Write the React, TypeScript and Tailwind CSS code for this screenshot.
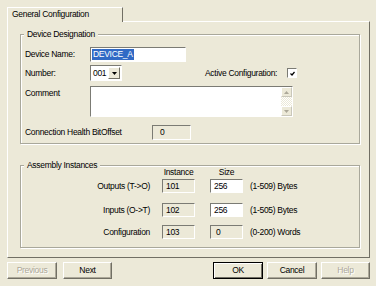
import React from 'react'

// XP classic-ish 3D edges
const sunkenWhite = 'border border-t-[#7b7b74] border-l-[#7b7b74] border-b-white border-r-white bg-white'
const sunkenGray = 'border border-t-[#7b7b74] border-l-[#7b7b74] border-b-white border-r-white bg-[#ECE9D8]'
const etched = 'border border-[#a9a89b] shadow-[inset_1px_1px_0_#fff,1px_1px_0_#fff]'

function Group({ title, className, children }: { title: string; className: string; children: React.ReactNode }) {
  return (
    <div className={`relative ml-[12px] w-[340px] ${etched} ${className}`}>
      <span className="absolute -top-[6px] left-[3px] bg-[#ECE9D8] px-[3px] leading-[11px]">{title}</span>
      {children}
    </div>
  )
}

function Button({ label, w, ml, disabled, isDefault }: { label: string; w: string; ml: string; disabled?: boolean; isDefault?: boolean }) {
  const edge = isDefault
    ? 'border border-black shadow-[inset_1px_1px_0_#fff,inset_-1px_-1px_0_#716f64]'
    : 'border border-t-white border-l-white border-b-[#716f64] border-r-[#716f64] shadow-[inset_-1px_-1px_0_#aca899]'
  return (
    <div className={`${w} ${ml} h-[17px] flex items-center justify-center ${edge} ${disabled ? 'text-[#aca899] [text-shadow:1px_1px_0_#fff]' : ''}`}>
      {label}
    </div>
  )
}

function Arrow({ up, color }: { up?: boolean; color: string }) {
  return (
    <svg width="5" height="3" viewBox="0 0 5 3">
      <path d={up ? 'M0 3 L2.5 0 L5 3 Z' : 'M0 0 L5 0 L2.5 3 Z'} fill={color} />
    </svg>
  )
}

export default function App() {
  const rows = [
    { label: 'Outputs (T->O)', inst: '101', size: '256', range: '(1-509) Bytes', editable: true, mt: 'mt-[1px]' },
    { label: 'Inputs (O->T)', inst: '102', size: '256', range: '(1-505) Bytes', editable: true, mt: 'mt-[10px]' },
    { label: 'Configuration', inst: '103', size: '0', range: '(0-200) Words', editable: false, mt: 'mt-[8px]' },
  ]

  return (
    <div className="w-[376px] h-[286px] bg-[#ECE9D8] text-black text-[8.5px] tracking-[-0.3px] font-['Liberation_Sans','Arial',sans-serif] overflow-hidden">
      {/* tab strip */}
      <div className="pt-[7px] pl-[7px] flex">
        <div className="relative z-10 -mb-px w-[116px] h-[15px] bg-[#ECE9D8] border-t border-l border-r border-t-white border-l-white border-r-[#716f64] pl-[4px] leading-[13px]">
          General Configuration
        </div>
      </div>

      {/* tab panel */}
      <div className="ml-[7px] w-[363px] h-[237px] border border-t-white border-l-white border-r-[#716f64] border-b-[#716f64] pt-[12px]">
        <Group title="Device Designation" className="h-[110px] pt-[12px] pl-[4px]">
          <div className="flex items-center h-[15px]">
            <span className="w-[65px]">Device Name:</span>
            <div className={`w-[96px] h-[15px] ${sunkenWhite} flex items-center pl-[1px]`}>
              <span className="bg-[#316ac5] text-white leading-[11px] px-[1px]">DEVICE_A</span>
            </div>
          </div>

          <div className="flex items-center h-[16px] mt-[3px]">
            <span className="w-[65px]">Number:</span>
            <div className={`w-[32px] h-[16px] ${sunkenWhite} flex items-center justify-between pl-[2px] pr-px`}>
              <span>001</span>
              <div className="w-[12px] h-[12px] bg-[#ECE9D8] border border-t-white border-l-white border-b-[#716f64] border-r-[#716f64] flex items-center justify-center">
                <Arrow color="#000" />
              </div>
            </div>
            <span className="ml-[83px] w-[82px]">Active Configuration:</span>
            <div className={`w-[10px] h-[10px] ${sunkenWhite} flex items-center justify-center`}>
              <svg width="5" height="5" viewBox="0 0 5 5">
                <path d="M0.5 2.5 L2 4 L4.5 1" stroke="#000" strokeWidth="1.2" fill="none" />
              </svg>
            </div>
          </div>

          <div className="flex items-start mt-[5px]">
            <span className="w-[65px] pt-px">Comment</span>
            <div className={`w-[203px] h-[31px] ${sunkenWhite} flex justify-end`}>
              <div className="w-[11px] h-full flex flex-col">
                <div className="h-[10px] bg-[#ECE9D8] border border-t-white border-l-white border-b-[#c9c7ba] border-r-[#c9c7ba] flex items-center justify-center">
                  <Arrow up color="#aca899" />
                </div>
                <div className="flex-1 bg-[repeating-conic-gradient(#fff_0_25%,#ECE9D8_0_50%)] bg-[length:2px_2px]" />
                <div className="h-[10px] bg-[#ECE9D8] border border-t-white border-l-white border-b-[#c9c7ba] border-r-[#c9c7ba] flex items-center justify-center">
                  <Arrow color="#aca899" />
                </div>
              </div>
            </div>
          </div>

          <div className="flex items-center h-[15px] mt-[8px]">
            <span className="w-[127px]">Connection Health BitOffset</span>
            <div className={`w-[39px] h-[15px] ${sunkenGray} flex items-center pl-[7px]`}>0</div>
          </div>
        </Group>

        <Group title="Assembly Instances" className="h-[83px] mt-[21px]">
          <div className="flex h-[11px] mt-px leading-[11px]">
            <span className="w-[141px]" />
            <span className="w-[33px] text-center">Instance</span>
            <span className="w-[33px] ml-[15px] text-center">Size</span>
          </div>
          {rows.map(r => (
            <div key={r.label} className={`flex items-center h-[14px] ${r.mt}`}>
              <span className="w-[129px] text-right">{r.label}</span>
              <div className={`ml-[12px] w-[33px] h-[14px] ${sunkenGray} flex items-center pl-[3px]`}>{r.inst}</div>
              <div className={`ml-[15px] w-[33px] h-[14px] ${r.editable ? sunkenWhite : sunkenGray} flex items-center ${r.editable ? 'pl-[3px]' : 'pl-[5px]'}`}>{r.size}</div>
              <span className="ml-[7px]">{r.range}</span>
            </div>
          ))}
        </Group>
      </div>

      {/* buttons */}
      <div className="flex mt-[4px]">
        <Button label="Previous" w="w-[50px]" ml="ml-[7px]" disabled />
        <Button label="Next" w="w-[49px]" ml="ml-[6px]" />
        <Button label="OK" w="w-[50px]" ml="ml-[101px]" isDefault />
        <Button label="Cancel" w="w-[50px]" ml="ml-[4px]" />
        <Button label="Help" w="w-[49px]" ml="ml-[4px]" disabled />
      </div>
    </div>
  )
}
